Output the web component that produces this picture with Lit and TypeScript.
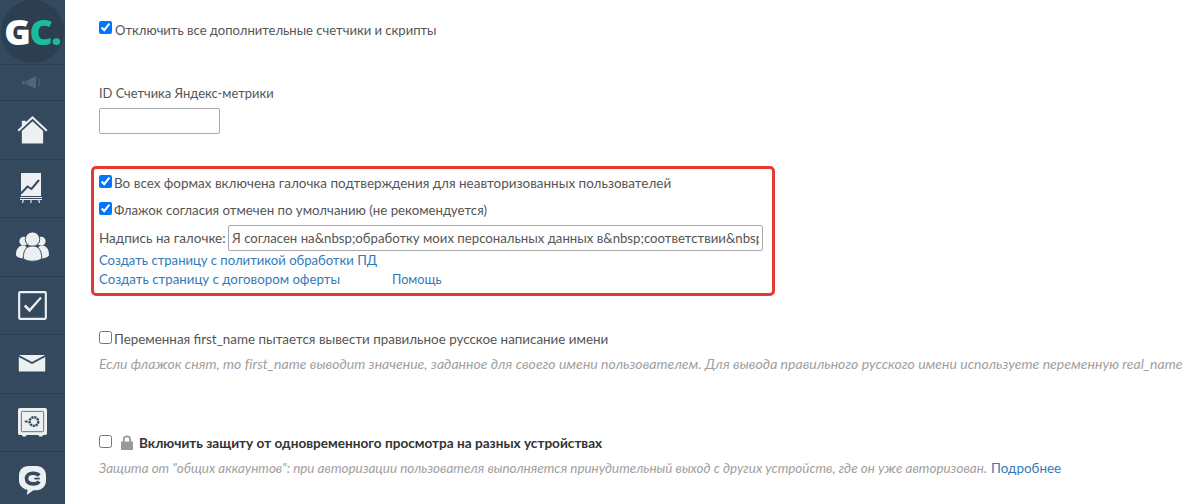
import { LitElement, html, css, svg } from "lit";
import { customElement } from "lit/decorators.js";

const icons = {
  sound: svg`<svg width="20" height="13" viewBox="0 0 20 13"><g fill="#4f6680"><rect x="0" y="5" width="2.500" height="3"/><rect x="3.500" y="4.500" width="2" height="4"/><path d="M6 4 14 0V13L6 9Z"/><path d="M16 2c2 2.500 2 6.500 0 9" fill="none" stroke="#4f6680" stroke-width="1"/></g></svg>`,
  home: svg`<svg width="31" height="30" viewBox="0 0 32 30"><g fill="#ecf0f1"><path d="M16 .5 31.500 15l-1.500 1.500L16 3.500 2 16.500.5 15 5 10.800V5.500h4v1.600z"/><path d="M16 6 27 16v13H5V16z"/></g></svg>`,
  chart: svg`<svg class="shift" width="22" height="30" viewBox="0 0 22 30"><rect x="1" y="0" width="20" height="23" fill="#ecf0f1"/><path d="M1 20.500 7.500 13.500l4 2.500L19 7" fill="none" stroke="#34495e" stroke-width="2"/><path d="M0 24.500h22M0 26.500h22" stroke="#ecf0f1" stroke-width="1"/><path d="M3.500 26 2.500 30M11 26v4M18.500 26l1 4" stroke="#dfe4e7" stroke-width="1.200"/></svg>`,
  users: svg`<svg width="33" height="30" viewBox="0 0 34 30"><g fill="#ecf0f1"><circle cx="8" cy="9" r="4.500"/><circle cx="26" cy="9" r="4.500"/><path d="M0 23c0-6 3-9.500 7-9.500 3 0 5 2 5 6v7.500c-6 0-12-1-12-4zM34 23c0-6-3-9.500-7-9.500-3 0-5 2-5 6v7.500c6 0 12-1 12-4z"/><circle cx="17" cy="7" r="7.500" stroke="#34495e" stroke-width="1"/><path d="M7.500 27c0-10 4-13 9.500-13s9.500 3 9.500 13c-4 3.500-15 3.500-19 0z" stroke="#34495e" stroke-width="1"/></g></svg>`,
  check: svg`<svg width="29" height="29" viewBox="0 0 30 30"><rect x="1.200" y="1.200" width="27.600" height="27.600" rx="1" fill="none" stroke="#ecf0f1" stroke-width="2.200"/><path d="M6 16l2-2 4 4L23 6l1.600 1.400L12 22z" fill="#ecf0f1"/></svg>`,
  mail: svg`<svg width="28" height="17" viewBox="0 0 28 18"><g fill="#ecf0f1"><path d="M0 0 14 7.500 28 0z"/><path d="M0 2 14 9.500 28 2V17.500H0z"/></g></svg>`,
  safe: svg`<svg width="29" height="29" viewBox="0 0 30 30"><path d="M2 0h26a2 2 0 0 1 2 2v24a2 2 0 0 1-2 2h-2l-1 1.500h-3l-1-1.500H9l-1 1.500H5L4 28H2a2 2 0 0 1-2-2V2a2 2 0 0 1 2-2z" fill="#ecf0f1"/><rect x="3.500" y="3.500" width="23" height="21" rx="1" fill="none" stroke="#5d7186" stroke-width="1"/><circle cx="16.500" cy="14" r="4.500" fill="none" stroke="#34495e" stroke-width="2.500" stroke-dasharray="2.200 .8"/><path d="M7 14h3" stroke="#34495e" stroke-width="2"/></svg>`,
  chat: svg`<svg width="27" height="29" viewBox="0 0 28 30"><path fill="#ecf0f1" d="M10 0h8c6 0 10 4 10 10v5c0 6-4 10-10 10h-3l-7 5 1-5.300C4 24 0 20 0 15v-5C0 4 4 0 10 0z"/><path d="M21 9.800C19.500 8 17.500 7.500 14.500 7.500c-4 0-6.700 2-6.700 5.500s2.700 5.500 6.700 5.500c3 0 5-.5 6.500-2.300" fill="none" stroke="#34495e" stroke-width="3.800"/><path d="M16 13h5.500" stroke="#34495e" stroke-width="1.800"/></svg>`,
};

@customElement("app-root")
export class AppRoot extends LitElement {
  static styles = css`
    :host {
      display: flex;
      width: 1200px;
      height: 504px;
      overflow: hidden;
      background: #fff;
      font-family: "Lato", "Open Sans", sans-serif;
      font-size: 13.300px;
      color: #555;
    }
    .side {
      width: 64.500px;
      flex: none;
      background: #34495e;
      display: flex;
      flex-direction: column;
      align-items: stretch;
    }
    .logo {
      height: 65px;
      flex: none;
      border-bottom: 1px solid #2c3e50;
      box-sizing: border-box;
      display: flex;
      align-items: center;
      justify-content: center;
    }
    .disc {
      width: 63px;
      height: 63px;
      border-radius: 50%;
      background: #2c3e50;
      display: flex;
      align-items: center;
      justify-content: center;
      font-family: "Open Sans", sans-serif;
      font-weight: 800;
      font-size: 36px;
      letter-spacing: -1.500px;
      color: #fff;
      margin-top: -1px;
    }
    .disc span { color: #1abc9c; }
    .item {
      flex: none;
      display: flex;
      align-items: center;
      justify-content: center;
      box-sizing: border-box;
      border-bottom: 1px solid #2c3e50;
      height: 58.500px;
    }
    .item.small { height: 36px; }
    .shift { margin-left: -2px; }
    .main {
      flex: 1;
      min-width: 0;
      padding: 20px 0 0 34.500px;
      white-space: nowrap;
    }
    .row { display: flex; align-items: center; height: 20px; }
    input[type="checkbox"] { margin: -4px 2px 0 0; width: 13px; height: 13px; flex: none; }
    .disable input[type="checkbox"] { margin: -6px 3px 0 0; }
    a { color: #337ab7; text-decoration: none; }
    .label { height: 20px; line-height: 20px; margin-top: 43px; font-size: 12.950px; }
    .text {
      display: block;
      box-sizing: border-box;
      width: 121px;
      height: 26px;
      margin-top: 5px;
      border: 1px solid #a9a9a9;
      border-radius: 2px;
      padding: 0 3px;
      font: inherit;
      color: #555;
      background: #fff;
    }
    .box {
      box-sizing: border-box;
      width: 684px;
      height: 130px;
      margin: 32px 0 0 -8px;
      padding: 4px 0 0 5px;
      border: 3px solid #e53935;
      border-radius: 5px;
    }
    .box .row + .row { margin-top: 7px; }
    .disable { font-size: 13.060px; }
    .forms { font-size: 13.470px; }
    .default { font-size: 13.260px; }
    .field { display: flex; align-items: center; gap: 3px; height: 26px; margin-top: 5px; }
    .field span { width: 126px; flex: none; font-size: 13.500px; }
    .field input { width: 535px; height: 26px; margin: 0; flex: none; padding: 0 3px; display: block; font-size: 13.200px; }
    .link { height: 20px; line-height: 20px; }
    .policy { margin-top: -1px; font-size: 13.100px; height: 19px; }
    .help { margin-left: 52px; font-size: 12.700px; }
    .hint { height: 20px; line-height: 20px; font-style: italic; color: #a0a0a0; margin-top: 5px; font-size: 14px; letter-spacing: .02px; }
    .hint.narrow { font-size: 13.450px; letter-spacing: 0; }
    .hint.narrow a { margin-left: 1px; font-style: normal; }
    .first { margin-top: 33px; font-size: 13.400px; }
    .second { margin-top: 59px; }
    .lock { margin: -2px 5px 0 6px; flex: none; }
    b { color: #333; font-weight: 700; font-size: 13.600px; }
  `;

  render() {
    return html`
      <nav class="side">
        <div class="logo"><div class="disc">G<span>C.</span></div></div>
        <div class="item small">${icons.sound}</div>
        <div class="item">${icons.home}</div>
        <div class="item">${icons.chart}</div>
        <div class="item">${icons.users}</div>
        <div class="item">${icons.check}</div>
        <div class="item">${icons.mail}</div>
        <div class="item">${icons.safe}</div>
        <div class="item">${icons.chat}</div>
      </nav>
      <main class="main">
        <label class="row disable"><input type="checkbox" checked />Отключить все дополнительные счетчики и скрипты</label>
        <div class="label">ID Счетчика Яндекс-метрики</div>
        <input class="text" type="text" />
        <section class="box">
          <label class="row forms"><input type="checkbox" checked />Во всех формах включена галочка подтверждения для неавторизованных пользователей</label>
          <label class="row default"><input type="checkbox" checked />Флажок согласия отмечен по умолчанию (не рекомендуется)</label>
          <div class="field"><span>Надпись на галочке:</span><input class="text" type="text" value="Я согласен на&amp;nbsp;обработку моих персональных данных в&amp;nbsp;соответствии&amp;nbsp;с политикой" /></div>
          <div class="link policy"><a>Создать страницу с политикой обработки ПД</a></div>
          <div class="link"><a>Создать страницу с договором оферты</a><a class="help">Помощь</a></div>
        </section>
        <label class="row first"><input type="checkbox" />Переменная first_name пытается вывести правильное русское написание имени</label>
        <div class="hint">Если флажок снят, то first_name выводит значение, заданное для своего имени пользователем. Для вывода правильного русского имени используете переменную real_name</div>
        <label class="row second"><input type="checkbox" />
          <svg class="lock" width="14" height="15" viewBox="0 0 14 15"><path d="M1 6.500h12V15H1z" fill="#999"/><path d="M3.800 7V4.500a3.200 3.200 0 0 1 6.400 0V7" fill="none" stroke="#999" stroke-width="1.800"/></svg>
          <b>Включить защиту от одновременного просмотра на разных устройствах</b></label>
        <div class="hint narrow">Защита от "общих аккаунтов": при авторизации пользователя выполняется принудительный выход с других устройств, где он уже авторизован. <a>Подробнее</a></div>
      </main>
    `;
  }
}
